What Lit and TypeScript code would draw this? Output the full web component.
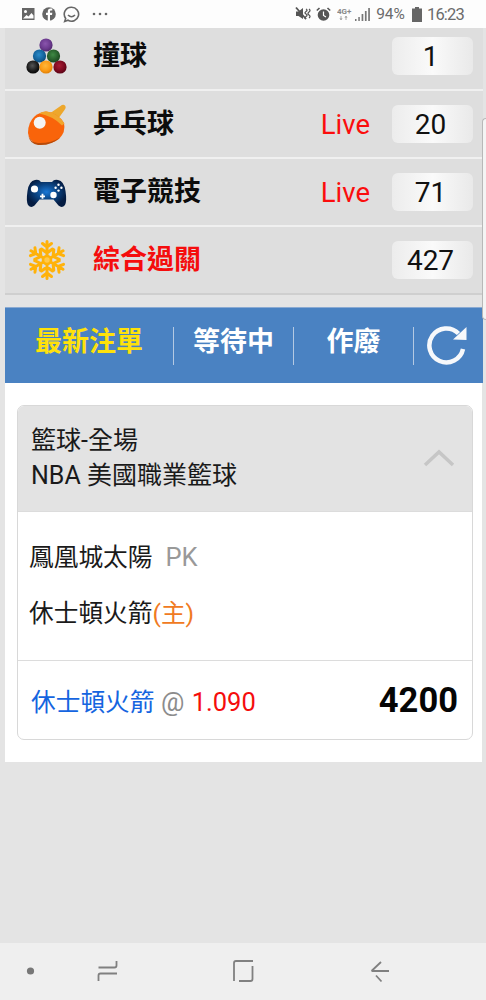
import { LitElement, html, css, svg } from "lit";
import { customElement } from "lit/decorators.js";

const ball = (id: string, cx: number, cy: number) =>
  svg`<circle cx=${cx} cy=${cy} r="6.6" fill="url(#${id})"/>`;
const grad = (id: string, light: string, mid: string, dark: string) =>
  svg`<radialGradient id=${id} cx="45%" cy="40%" r="65%"><stop offset="0" stop-color=${light}/><stop offset=".6" stop-color=${mid}/><stop offset="1" stop-color=${dark}/></radialGradient>`;

const billiards = html`<svg class="icon" viewBox="0 0 44 44">
  <defs>
    ${grad("bp", "#8a55ad", "#6b3a8e", "#4a2566")}
    ${grad("bb", "#2a8bc9", "#14649e", "#0c466f")}
    ${grad("bg", "#3f8a45", "#275f2c", "#17401b")}
    ${grad("bk", "#555", "#1c1c1c", "#000")}
    ${grad("bo", "#ffb73a", "#fb9a14", "#d97a05")}
    ${grad("br", "#a81c34", "#7c0a20", "#520313")}
  </defs>
  ${ball("bp", 21, 11)}${ball("bb", 14.5, 22)}${ball("bg", 28.5, 22)}
  ${ball("bk", 8, 33)}${ball("bo", 21, 33)}${ball("br", 35, 33)}
</svg>`;

const paddle = html`<svg class="icon" viewBox="0 0 44 44">
  <path d="M24 12 L35.500 4 Q38 2 40 3.500 Q41.500 5.500 39.500 8 L33 17 Z" fill="#eda72c"/>
  <path d="M21 9.500 Q33 11 39 21 Q41 30 34 37 Q26 43 13 42 Q4 40 3 31 Q3 20 10 14 Q15 10 21 9.500 Z" fill="#f9640a"/>
  <path d="M14 11.500 Q18 9 22 9.500 Q33 11 39.500 21.500 L37 23.500 Q28 14 14 11.500 Z" fill="#f1a52c"/>
  <path d="M3.200 33 Q5 40.500 13 41 Q26 41.500 35 35.500 Q26 44 13 43 Q4.500 41.500 3.200 33 Z" fill="#b84a08"/>
  <circle cx="14.700" cy="20.700" r="6" fill="#f4f4f4"/>
</svg>`;

const gamepad = html`<svg class="icon" viewBox="0 0 44 44">
  <defs>
    <radialGradient id="gp" cx="50%" cy="45%" r="52%"><stop offset="0" stop-color="#1a78d6"/><stop offset=".5" stop-color="#0b4788"/><stop offset="1" stop-color="#041c42"/></radialGradient>
  </defs>
  <path d="M10 10 Q14 9 16 12 H27 Q29 9 33 10 Q39 11 40.500 21 Q42 31 40 35 Q37 38.500 33.500 35.500 L28.500 29.500 H14.500 L9.500 35.500 Q6 38.500 3 35 Q1 31 2.500 21 Q4 11 10 10 Z" fill="url(#gp)"/>
  <circle cx="9.500" cy="19" r="3.600" fill="#fff"/>
  <circle cx="28.500" cy="25" r="3.200" fill="#fff"/>
  <path d="M15 26.300h5M17.500 23.800v5" stroke="#fff" stroke-width="1.800" fill="none"/>
  <g fill="#fff"><circle cx="33.500" cy="14.800" r="1.200"/><circle cx="33.500" cy="20.600" r="1.200"/><circle cx="30.600" cy="17.700" r="1.200"/><circle cx="36.400" cy="17.700" r="1.200"/></g>
</svg>`;

const arm = (r: number) => svg`<g transform="rotate(${r} 22 22)">
  <path d="M22 18V3.500M22 9l-4.500-3.500M22 9l4.500-3.500M22 15l-5.500-4M22 15l5.500-4" stroke="#ffb20a" stroke-width="3" fill="none" stroke-linecap="round"/>
</g>`;
const snow = html`<svg class="icon" viewBox="0 0 44 44">
  ${[0, 60, 120, 180, 240, 300].map(arm)}
  <circle cx="22" cy="22" r="4" fill="#ffc94d" stroke="#ffb20a" stroke-width="2.600"/>
</svg>`;

interface Sport { name: string; icon: unknown; live?: boolean; count: string; hot?: boolean }
const sports: Sport[] = [
  { name: "撞球", icon: billiards, count: "1" },
  { name: "乒乓球", icon: paddle, live: true, count: "20" },
  { name: "電子競技", icon: gamepad, live: true, count: "71" },
  { name: "綜合過關", icon: snow, count: "427", hot: true },
];

@customElement("app-root")
export class AppRoot extends LitElement {
  static styles = css`
    :host { display: block; width: 486px; height: 1000px; overflow: hidden; font-family: Roboto, "Noto Sans CJK TC", sans-serif; }
    .page { position: relative; height: 1000px; display: flex; flex-direction: column; background: #e4e4e4; color: #111; }
    .status { position: relative; z-index: 1; flex: 0 0 28px; background: #fdfdfd; display: flex; align-items: center; color: #6b6b6b; }
    .status svg { display: block; flex: none; }
    .s-left { display: flex; align-items: center; margin-left: 21px; gap: 7px; }
    .s-right { margin-left: auto; margin-right: 22px; display: flex; align-items: center; }
    .pct { font-size: 15.500px; margin: 0 7px 0 5px; }
    .clock { font-size: 16.500px; margin-left: 5px; letter-spacing: -0.8px; }
    .list { flex: 0 0 267px; overflow: hidden; margin-right: 3px; margin-left: 5px; }
    .rows { margin-top: -5px; }
    .row { box-sizing: border-box; height: 68px; background: #dedede; border-bottom: 2px solid #f0f0f0; display: flex; align-items: center; padding: 0 10px 0 20px; }
    .row:last-child { border-bottom: 2px solid #cfcfcf; }
    .icon { width: 44px; height: 44px; flex: none; display: block; }
    .name { margin-left: 24px; font-size: 27px; line-height: 34px; font-weight: 700; color: #0c0c0c; flex: 1; }
    .name.hot { color: #f50d0d; }
    .live { color: #fb0d0d; font-size: 27.500px; margin-right: 22px; }
    .count { box-sizing: border-box; width: 81px; height: 38px; padding-right: 4px; border-radius: 6px; background: linear-gradient(90deg, #ececec, #fafafa 50%, #e9e9e9); display: flex; align-items: center; justify-content: center; font-size: 28px; color: #111; }
    .tabs { flex: 0 0 76px; margin: 12px 3px 0 5px; background: #4a82c2; border-top: 1px solid #8aaad2; box-sizing: border-box; display: grid; grid-template-columns: 169px 120px 120px 1fr; align-items: center; }
    .tab { height: 38px; display: flex; align-items: center; justify-content: center; font-size: 27px; line-height: 1; font-weight: 700; color: #fff; border-right: 1px solid #b4c9e3; padding-bottom: 6px; box-sizing: border-box; }
    .tab.on { color: #ffe10a; }
    .tab.last { border: 0; padding: 0 0 4px 12px; justify-content: flex-start; }
    .panel { flex: 0 0 379px; box-sizing: border-box; margin: 0 4px 0 5px; background: #fff; padding: 22px 9px 22px 12px; }
    .card { box-sizing: border-box; height: 335px; border: 1px solid #d8d8d8; border-radius: 7px; overflow: hidden; display: flex; flex-direction: column; }
    .head { flex: 0 0 105px; box-sizing: border-box; background: #e3e3e3; padding: 17px 17px 0 13px; display: flex; justify-content: space-between; font-size: 25px; line-height: 35px; color: #1a1a1a; }
    .head svg { display: block; margin-top: 26px; flex: none; }
    .body { flex: 0 0 150px; box-sizing: border-box; border-top: 1px solid #dcdcdc; border-bottom: 1px solid #dcdcdc; padding: 17px 11px 0; font-size: 24.700px; line-height: 56px; color: #1a1a1a; }
    .pk { color: #999; margin-left: 13px; font-size: 25.500px; }
    .home { color: #f07a22; }
    .foot { flex: 1; display: flex; align-items: center; justify-content: space-between; padding: 0 14px 0 13px; font-size: 24.700px; }
    .team { color: #1565e0; }
    .at { color: #8c8c8c; margin: 0 1px 0 0; font-size: 26px; }
    .odds { color: #f50d0d; font-size: 25.500px; }
    .stake { font-size: 34.500px; font-weight: 700; color: #050505; }
    .spacer { flex: 1; }
    .nav { flex: 0 0 57px; background: #efefef; position: relative; }
    .nav svg { display: block; width: 486px; height: 57px; }
    .edge { position: absolute; left: 482px; top: 118px; width: 4px; height: 202px; box-sizing: border-box; background: #f4f4f4; border: 1px solid #b8b8b8; border-right: 0; border-radius: 4px 0 0 4px; z-index: 2; }
  `;

  render() {
    return html`<div class="page">
      <div class="status">
        <div class="s-left">
          <svg width="14" height="14" viewBox="0 0 14 14"><path fill="#666" d="M1 1h12.500v12H1z"/><circle cx="4.500" cy="4.500" r="1.500" fill="#fff"/><path d="M2 11.500l3.500-3.500 2 1.500 3-3.500 2 2.500v3z" fill="#fff"/></svg>
          <svg width="14" height="14" viewBox="0 0 14 14"><circle cx="7" cy="7" r="6.800" fill="#666"/><path d="M8 14V8h2l.3-2.200H8V4.600c0-.7.3-1.100 1.100-1.100h1.200V1.600C9.700 1.500 9.200 1.500 8.700 1.500 7 1.500 5.800 2.500 5.800 4.300v1.500H4V8h1.800v6z" fill="#fff"/></svg>
          <svg width="17" height="17" viewBox="0 0 17 17"><path d="M8.500 1.200a7 7 0 1 1-3.500 13l-3.300 1.200 1-3A7 7 0 0 1 8.500 1.200z" fill="none" stroke="#666" stroke-width="1.600"/><path d="M5 9q3.500 3.500 7 0" fill="none" stroke="#666" stroke-width="1.600"/></svg>
          <svg width="16" height="4" viewBox="0 0 16 4" style="margin-left:5px"><g fill="#666"><circle cx="2" cy="2" r="1.300"/><circle cx="8" cy="2" r="1.300"/><circle cx="14" cy="2" r="1.300"/></g></svg>
        </div>
        <div class="s-right">
          <svg width="16" height="16" viewBox="0 0 16 16"><path d="M1 5.500h2.500L8 2v11L3.500 10H1z" fill="#555"/><path d="M1 1.500L11 13" stroke="#555" stroke-width="1.800"/><path d="M11 3q2 1.200 0 2.500t0 2.500 0 2.500 0 2.500M14 3q2 1.500 0 3t0 3 0 3" stroke="#555" stroke-width="1.300" fill="none"/></svg>
          <svg width="15" height="15" viewBox="0 0 15 15" style="margin-left:5px"><circle cx="7.500" cy="8" r="5.800" fill="#555"/><path d="M7.500 4.500V8.500L10 10" stroke="#fff" stroke-width="1.200" fill="none"/><path d="M0.800 3.500L3.500 1M14.200 3.500L11.500 1" stroke="#555" stroke-width="1.600"/></svg>
          <svg width="15" height="16" viewBox="0 0 15 16" style="margin-left:6px"><text x="0" y="7.500" font-size="8" font-weight="700" fill="#888" font-family="Roboto">4G+</text><path d="M4 10v4M3 12l1 2 1-2M9 14v-4M8 12l1-2 1 2" stroke="#aaa" stroke-width="1" fill="none"/></svg>
          <svg width="16" height="15" viewBox="0 0 16 15" style="margin-left:3px"><path d="M0 12h1.500v2H0zM3.300 10h1.500v4H3.300zM6.600 7h1.700v7H6.600zM9.900 4h1.700v10H9.900zM13.200 1h1.700v13h-1.700z" fill="#777"/></svg>
          <span class="pct">94%</span>
          <svg width="10" height="15" viewBox="0 0 10 15"><path d="M3 0h4v1.500h3V15H0V1.500h3z" fill="#666"/></svg>
          <span class="clock">16:23</span>
        </div>
      </div>
      <div class="list"><div class="rows">
        ${sports.map(
          (s) => html`<div class="row">
            ${s.icon}
            <div class="name ${s.hot ? "hot" : ""}">${s.name}</div>
            ${s.live ? html`<div class="live">Live</div>` : ""}
            <div class="count">${s.count}</div>
          </div>`
        )}
      </div></div>
      <div class="tabs">
        <div class="tab on">最新注單</div>
        <div class="tab">等待中</div>
        <div class="tab">作廢</div>
        <div class="tab last">
          <svg width="42" height="42" viewBox="0 0 42 42"><path d="M32.500 10.500A17 17 0 1 0 37 26" fill="none" stroke="#f6f8fb" stroke-width="4.500"/><path d="M27 16.500L40.500 17V4z" fill="#f6f8fb"/></svg>
        </div>
      </div>
      <div class="panel">
        <div class="card">
          <div class="head">
            <div>籃球-全場<br />NBA 美國職業籃球</div>
            <svg width="32" height="18" viewBox="0 0 32 18"><path d="M2 16L16 3l14 13" fill="none" stroke="#c6c6c6" stroke-width="3.500"/></svg>
          </div>
          <div class="body">
            <div>鳳凰城太陽<span class="pk">PK</span></div>
            <div>休士頓火箭<span class="home">(主)</span></div>
          </div>
          <div class="foot">
            <div><span class="team">休士頓火箭</span><span class="at"> @ </span><span class="odds">1.090</span></div>
            <div class="stake">4200</div>
          </div>
        </div>
      </div>
      <div class="spacer"></div>
      <div class="nav">
        <svg viewBox="0 0 486 57">
          <circle cx="30.500" cy="28" r="3.600" fill="#777"/>
          <g fill="none" stroke="#808080" stroke-width="1.800">
            <path d="M98.500 38v-5.500q0-2 2-2h16.500M116.500 18v4.500q0 2-2 2H98.500"/>
            <path d="M234 38v-18q0-2 2-2h17M252.500 23v13q0 2-2 2H239"/>
            <path d="M389 28H371.500M381 19l-9.500 9M376 32.500l5.500 6"/>
          </g>
        </svg>
      </div>
      <div class="edge"></div>
    </div>`;
  }
}
